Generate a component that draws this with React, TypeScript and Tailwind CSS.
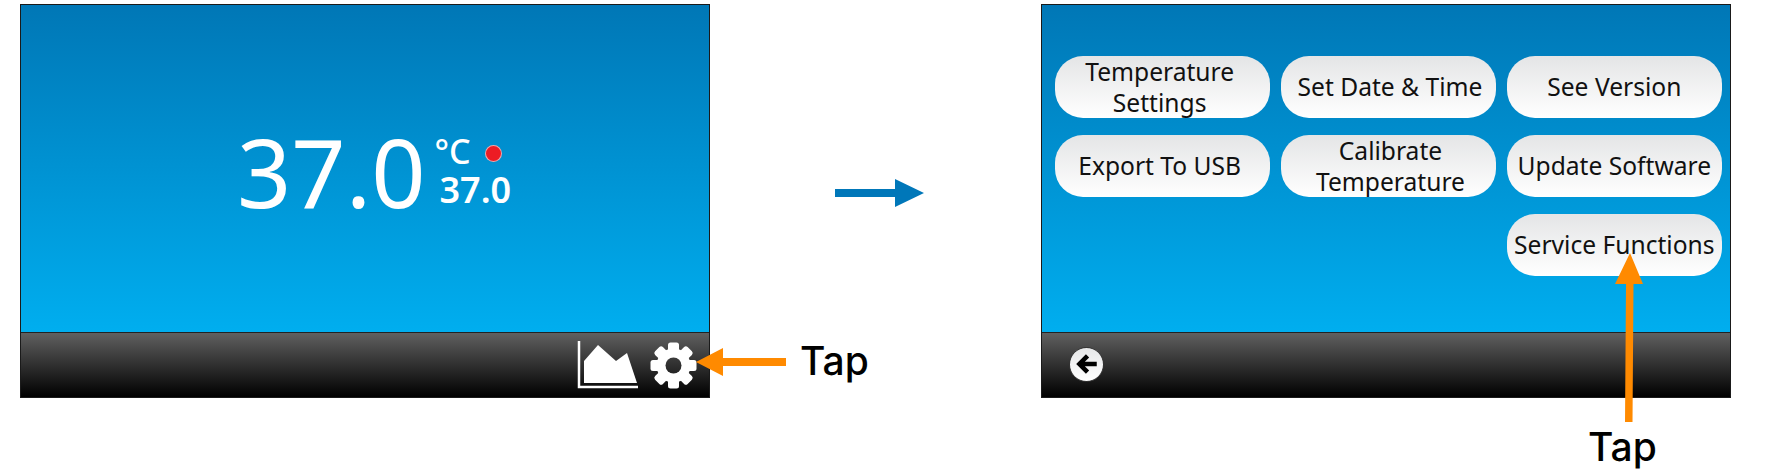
const menuItems = [
  { label: ["Temperature", "Settings"], extra: "pr-[6px]" },
  { label: ["Set Date & Time"], extra: "pl-[3px]" },
  { label: ["See Version"], extra: "" },
  { label: ["Export To USB"], extra: "pr-[6px]" },
  { label: ["Calibrate", "Temperature"], extra: "pl-[4px]" },
  { label: ["Update Software"], extra: "" },
  { label: ["Service Functions"], extra: "col-start-3" },
];

const gearTeeth = [0, 45, 90, 135, 180, 225, 270, 315];

function ChartIcon() {
  return (
    <svg width="62" height="48" viewBox="0 0 62 48" className="block">
      <path d="M2 0V46H61" fill="none" stroke="white" strokeWidth="2.5" />
      <path d="M7 42V20L21 4L39 20L50 12L60 42Z" fill="white" />
    </svg>
  );
}

function GearIcon() {
  return (
    <svg width="47" height="47" viewBox="0 0 47 47" className="block">
      <mask id="gear-hole">
        <rect width="47" height="47" fill="white" />
        <circle cx="23.5" cy="23.5" r="8" fill="black" />
      </mask>
      <g fill="white" mask="url(#gear-hole)">
        <circle cx="23.5" cy="23.5" r="17" />
        {gearTeeth.map((angle) => (
          <rect
            key={angle}
            x="18"
            y="0.5"
            width="11"
            height="12"
            rx="2.5"
            transform={`rotate(${angle} 23.5 23.5)`}
          />
        ))}
      </g>
    </svg>
  );
}

function TapLabel() {
  return <span className="font-['Inter',sans-serif] font-medium text-[39px] leading-none text-black">Tap</span>;
}

function Screen({ main, bar }: { main: React.ReactNode; bar: React.ReactNode }) {
  return (
    <div className="flex h-[394px] w-[690px] shrink-0 flex-col border border-[#1a1a1a]">
      <div className="h-[327px] bg-linear-to-b/srgb from-[#0077b6] to-[#00aeef]">{main}</div>
      <div className="flex h-[65px] items-center border-t border-[#222] bg-linear-to-b/srgb from-[#606060] to-black">{bar}</div>
    </div>
  );
}

export default function App() {
  return (
    <div className="relative flex h-[474px] w-[1765px] items-start overflow-hidden bg-white pl-[20px] pt-[4px] font-['Noto_Sans',sans-serif]">
      <Screen
        main={
          <div className="flex h-full items-start pl-[216px] pt-[111px] text-white">
            <span className="text-[95px] leading-[110px]">37.0</span>
            <div className="ml-[9px] mt-[17px] flex flex-col">
              <div className="flex items-center">
                <span className="text-[34px] leading-[36px] font-medium">°C</span>
                <span className="ml-[14px] mt-[4px] h-[17px] w-[17px] rounded-full border border-white/60 bg-[#ed1c24]" />
              </div>
              <span className="ml-[5px] mt-[3px] text-[36px] leading-[36px] font-semibold">37.0</span>
            </div>
          </div>
        }
        bar={
          <div className="ml-auto flex items-center gap-[11px] pr-[12px]">
            <ChartIcon />
            <GearIcon />
          </div>
        }
      />

      <div className="ml-[125px] mt-[175px] h-[28px] w-[89px] shrink-0">
        <svg width="89" height="28" viewBox="0 0 89 28" className="block">
          <path d="M0 10H60V0L89 14L60 28V18H0Z" fill="#0077b9" />
        </svg>
      </div>

      <div className="ml-[117px]">
        <Screen
          main={
            <div className="grid w-[680px] grid-cols-3 gap-x-[10.5px] gap-y-[17px] pl-[13px] pt-[51px]">
              {menuItems.map((item) => (
                <div
                  key={item.label[0]}
                  className={`flex h-[62px] flex-col items-center justify-center rounded-[28px] bg-linear-to-b/srgb from-[#e4e5e6] to-white pb-[1px] text-[24.6px] leading-[31px] text-[#111] ${item.extra}`}
                >
                  {item.label.map((line) => (
                    <span key={line}>{line}</span>
                  ))}
                </div>
              ))}
            </div>
          }
          bar={
            <div className="mb-[2px] ml-[27px] flex h-[35px] w-[35px] items-center justify-center rounded-full border border-[#333] bg-linear-to-b/srgb from-[#e6e7e8] to-white">
              <svg width="26" height="26" viewBox="0 0 24 24">
                <path d="M21 12H6M12.5 4.5L5 12L12.5 19.5" fill="none" stroke="black" strokeWidth="4.2" />
              </svg>
            </div>
          }
        />
      </div>

      {/* tap callouts sit on top of both screens */}
      <div className="absolute left-[696px] top-[348px]">
        <svg width="90" height="28" viewBox="0 0 90 28" className="block">
          <path d="M0 14L27 0V10H90V18H27V28Z" fill="#ff8a00" />
        </svg>
      </div>
      <div className="absolute left-[800px] top-[341px]">
        <TapLabel />
      </div>

      <div className="absolute left-[1615px] top-[253px]">
        <svg width="28" height="170" viewBox="0 0 28 170" className="block">
          <path d="M15 0L28 31H18.5L17.5 169H10L11 31H0Z" fill="#ff8a00" />
        </svg>
      </div>
      <div className="absolute left-[1588px] top-[427px]">
        <TapLabel />
      </div>
    </div>
  );
}
